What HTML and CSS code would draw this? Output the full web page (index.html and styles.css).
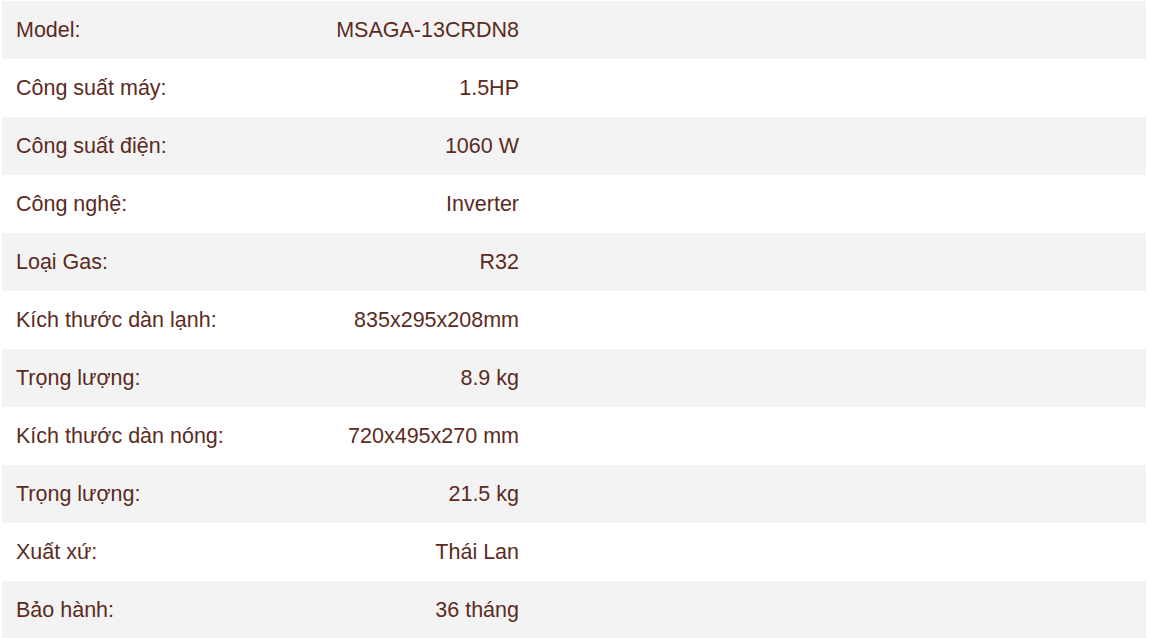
FILE: index.html
```html
<!DOCTYPE html>
<html lang="vi">
<head>
<meta charset="utf-8">
<title>Thông số</title>
<link rel="stylesheet" href="styles.css">
</head>
<body>
<div class="wrap">
  <table class="specs">
    <tbody>
      <tr><td class="k">Model:</td><td class="v">MSAGA-13CRDN8</td><td class="e"></td></tr>
      <tr><td class="k">Công suất máy:</td><td class="v">1.5HP</td><td class="e"></td></tr>
      <tr><td class="k">Công suất điện:</td><td class="v">1060 W</td><td class="e"></td></tr>
      <tr><td class="k">Công nghệ:</td><td class="v">Inverter</td><td class="e"></td></tr>
      <tr><td class="k">Loại Gas:</td><td class="v">R32</td><td class="e"></td></tr>
      <tr><td class="k">Kích thước dàn lạnh:</td><td class="v">835x295x208mm</td><td class="e"></td></tr>
      <tr><td class="k">Trọng lượng:</td><td class="v">8.9 kg</td><td class="e"></td></tr>
      <tr><td class="k">Kích thước dàn nóng:</td><td class="v">720x495x270 mm</td><td class="e"></td></tr>
      <tr><td class="k">Trọng lượng:</td><td class="v">21.5 kg</td><td class="e"></td></tr>
      <tr><td class="k">Xuất xứ:</td><td class="v">Thái Lan</td><td class="e"></td></tr>
      <tr><td class="k">Bảo hành:</td><td class="v">36 tháng</td><td class="e"></td></tr>
    </tbody>
  </table>
</div>
</body>
</html>
```
FILE: styles.css
```css
html, body {
  margin: 0;
  padding: 0;
  background: #ffffff;
}
.wrap {
  padding: 1px 3px 0 2px;
}
.specs {
  width: 1144px;
  border-collapse: collapse;
  table-layout: fixed;
  font-family: "Liberation Sans", Arial, sans-serif;
  font-size: 21.5px;
  color: #5b2b22;
}
.specs tr {
  height: 58px;
}
.specs tr:nth-child(odd) {
  background: #f3f3f3;
}
.specs td {
  padding: 0 14px;
  vertical-align: middle;
  white-space: nowrap;
}
.specs td.k {
  width: 240px;
}
.specs td.v {
  width: 235px;
  text-align: right;
}
```
